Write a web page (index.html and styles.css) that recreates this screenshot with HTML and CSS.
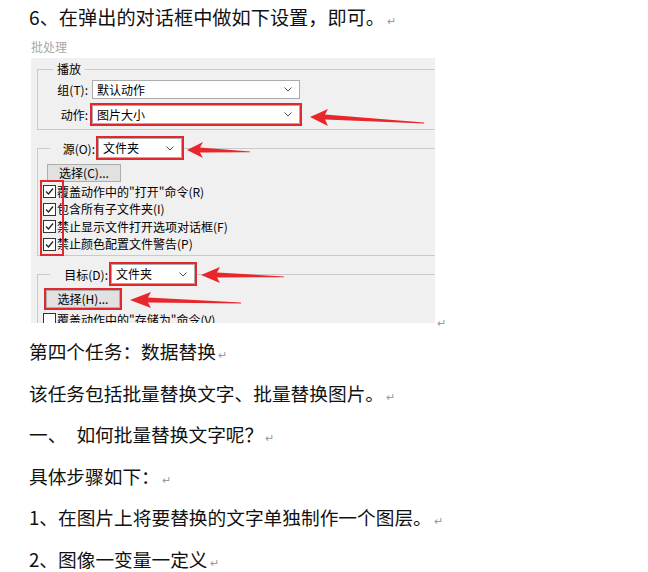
FILE: index.html
```html
<!DOCTYPE html>
<html lang="zh-CN">
<head>
    <meta charset="UTF-8">
    <meta name="viewport" content="width=device-width, initial-scale=1.0">
    <title>批处理设置</title>
    <link rel="stylesheet" href="styles.css">
</head>
<body>
    <div class="doc">
        <p class="lead">6、在弹出的对话框中做如下设置，即可。<span class="ret">↵</span></p>

        <div class="figure">
            <div class="shot">
                <div class="caption">批处理</div>
                <div class="dialog">
                    <fieldset class="group play">
                        <legend>播放</legend>
                        <div class="row first">
                            <span class="label">组(T):</span>
                            <div class="combo wide">默认动作<svg class="chev" viewBox="0 0 8 5"><path d="M0.5 0.5 L4 4 L7.5 0.5"/></svg></div>
                        </div>
                        <div class="row">
                            <span class="label">动作:</span>
                            <div class="combo wide mark">图片大小<svg class="chev" viewBox="0 0 8 5"><path d="M0.5 0.5 L4 4 L7.5 0.5"/></svg></div>
                        </div>
                    </fieldset>

                    <fieldset class="group src">
                        <legend>
                            <span class="label">源(O):</span>
                            <div class="combo mark">文件夹<svg class="chev" viewBox="0 0 8 5"><path d="M0.5 0.5 L4 4 L7.5 0.5"/></svg></div>
                        </legend>
                        <button class="btn">选择(C)...</button>
                        <div class="checks">
                            <div class="check"><span class="box"><svg viewBox="0 0 11 11"><path d="M2 5.5 L4.5 8 L9 2.5"/></svg></span>覆盖动作中的"打开"命令(R)</div>
                            <div class="check"><span class="box"><svg viewBox="0 0 11 11"><path d="M2 5.5 L4.5 8 L9 2.5"/></svg></span>包含所有子文件夹(I)</div>
                            <div class="check"><span class="box"><svg viewBox="0 0 11 11"><path d="M2 5.5 L4.5 8 L9 2.5"/></svg></span>禁止显示文件打开选项对话框(F)</div>
                            <div class="check"><span class="box"><svg viewBox="0 0 11 11"><path d="M2 5.5 L4.5 8 L9 2.5"/></svg></span>禁止颜色配置文件警告(P)</div>
                        </div>
                    </fieldset>

                    <fieldset class="group dst">
                        <legend>
                            <span class="label">目标(D):</span>
                            <div class="combo mark">文件夹<svg class="chev" viewBox="0 0 8 5"><path d="M0.5 0.5 L4 4 L7.5 0.5"/></svg></div>
                        </legend>
                        <button class="btn mark">选择(H)...</button>
                        <div class="checks">
                            <div class="check"><span class="box"></span>覆盖动作中的"存储为"命令(V)</div>
                        </div>
                    </fieldset>

                    <!-- red annotations drawn over the screenshot -->
                    <svg class="marks" viewBox="0 0 404 265" width="404" height="265">
                        <rect x="10" y="123" width="22" height="74" fill="none" stroke="#e0282e" stroke-width="2"/>
                        <polygon points="279,59 297,51 294,56.5 393,64.6 393,65.4 294,61.5 297,68"/>
                        <polygon points="156,92 172,84 169,89.5 219,93.5 219,94.3 169,94.5 172,100"/>
                        <polygon points="170,217 189,209 186,214.5 253,218.4 253,219.2 186,219.5 189,225"/>
                        <polygon points="99,242 120,234 117,239.5 210,244.6 210,245.5 117,244.5 120,250"/>
                    </svg>
                </div>
            </div>
            <span class="ret">↵</span>
        </div>

        <p class="para task">第四个任务：数据替换<span class="ret">↵</span></p>
        <p class="para">该任务包括批量替换文字、批量替换图片。<span class="ret">↵</span></p>
        <p class="para">一、<span class="tab"></span>如何批量替换文字呢？<span class="ret">↵</span></p>
        <p class="para">具体步骤如下：<span class="ret">↵</span></p>
        <p class="para">1、在图片上将要替换的文字单独制作一个图层。<span class="ret">↵</span></p>
        <p class="para">2、图像一变量一定义<span class="ret">↵</span></p>
    </div>
</body>
</html>
```

FILE: styles.css
```css
body {
    margin: 0;
    background: #fff;
    font-family: "Noto Sans CJK SC", "Noto Sans", sans-serif;
    color: #111;
}
.doc {
    padding: 3px 0 0 29px;
}
.lead {
    margin: 0;
    font-size: 19.2px;
    line-height: 28px;
}
.para {
    margin: 0;
    font-size: 18.7px;
    line-height: 41.5px;
}
.task {
    margin-top: 7px;
}
.tab {
    display: inline-block;
    width: 10px;
}
.ret {
    font-size: 11px;
    line-height: 0;
    color: #999;
    margin-left: 2px;
}

/* screenshot of the batch dialog */
.figure {
    display: flex;
    align-items: flex-end;
    margin: 8px 0 0 2px;
}
.figure .ret {
    line-height: 1;
    margin-bottom: -5px;
}
.shot {
    width: 404px;
    background: #fff;
}
.caption {
    font-size: 12px;
    line-height: 16px;
    color: #a8a8a8;
    padding-bottom: 3px;
}
.dialog {
    position: relative;
    height: 265px;
    overflow: hidden;
    background: #f0f0f0;
    padding-left: 6px;
    font-size: 12px;
    color: #000;
}
.group {
    margin: 0 -30px 0 0;
    padding: 0 0 5px 0;
    border: 1px solid #cacaca;
    min-width: 0;
}
.group legend {
    padding: 0;
}
.play {
    margin-top: 3px;
}
.play legend {
    margin-left: 15px;
    padding: 0 4px;
    line-height: 16px;
}
.src {
    margin-top: 8px;
    padding-bottom: 2px;
}
.dst {
    margin-top: 8px;
}
.src legend, .dst legend {
    display: flex;
    align-items: center;
    gap: 3px;
    margin-left: 12px;
    height: 20px;
}
.row {
    display: flex;
    align-items: center;
    gap: 4px;
    margin-top: 6px;
}
.row.first {
    margin-top: 3px;
}
.label {
    text-align: right;
}
.play .label {
    width: 50px;
}
.src .label {
    width: 45px;
}
.dst .label {
    width: 58px;
}
.combo {
    box-sizing: border-box;
    height: 19px;
    width: 84px;
    border: 1px solid #acacac;
    background: #fff;
    display: flex;
    align-items: center;
    justify-content: space-between;
    padding: 0 7px 0 4px;
    line-height: 16px;
}
.combo.wide {
    width: 208px;
}
.src .combo, .dst .combo {
    height: 20px;
}
.chev {
    width: 8px;
    height: 5px;
}
.chev path {
    fill: none;
    stroke: #555;
    stroke-width: 1;
}
.mark {
    outline: 2px solid #e0282e;
}
.btn {
    display: block;
    box-sizing: border-box;
    width: 74px;
    height: 18px;
    margin: 6px 0 0 9px;
    padding: 0;
    border: 1px solid #adadad;
    background: #e1e1e1;
    font: inherit;
    font-size: 12px;
    line-height: 16px;
    color: #000;
}
.dst .btn {
    margin-left: 8px;
}
.checks {
    margin-top: 1px;
}
.dst .checks {
    margin-top: 3px;
}
.check {
    display: flex;
    align-items: center;
    gap: 1px;
    height: 17.5px;
    margin-left: 5px;
    line-height: 16px;
}
.box {
    box-sizing: border-box;
    width: 13px;
    height: 13px;
    border: 1px solid #333;
    background: #fff;
    display: flex;
}
.box svg {
    width: 11px;
    height: 11px;
}
.box path {
    fill: none;
    stroke: #222;
    stroke-width: 1.3;
}
.marks {
    position: absolute;
    top: 0;
    left: 0;
    pointer-events: none;
}
.marks polygon {
    fill: #e8262b;
}
```
